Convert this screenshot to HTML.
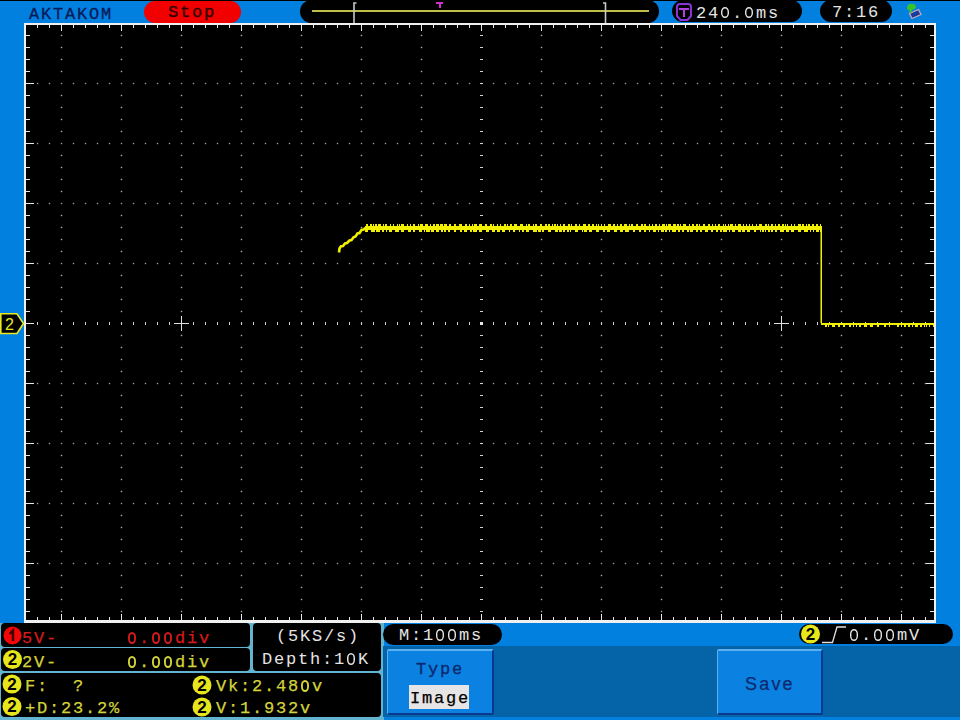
<!DOCTYPE html>
<html><head><meta charset="utf-8"><style>
*{margin:0;padding:0;box-sizing:border-box}
html,body{width:960px;height:720px;overflow:hidden;background:#0280e0;font-family:"Liberation Mono"}
.a{position:absolute}
.t{position:absolute;white-space:pre;font-size:17px;letter-spacing:1.8px;line-height:20px}
.tc{position:absolute;font-size:17px;line-height:20px;height:20px;width:10px}
.tc b{position:absolute;top:0;width:12px;text-align:center;font-weight:normal}
.tc i{position:absolute;border:2px solid;border-radius:4px/5px}
</style></head><body>
<div class="a" style="left:0;top:0;width:960px;height:1px;background:#000"></div>
<div class="a" style="left:144px;top:1px;width:97px;height:22px;border-radius:11px;background:#f20000"></div>
<div class="a" style="left:300px;top:0;width:359px;height:23px;border-radius:11.5px;background:#000"></div>
<div class="a" style="left:312px;top:10px;width:337px;height:2px;background:#bebe48"></div>
<div class="a" style="left:672px;top:0;width:130px;height:22px;border-radius:11px;background:#000"></div>
<div class="a" style="left:820px;top:0;width:72px;height:22px;border-radius:11px;background:#000"></div>
<div class="tc" style="left:28px;top:5px;color:#061a58;-webkit-text-stroke:0.3px #061a58;"><b style="left:0px">A</b><b style="left:12px">K</b><b style="left:24px">T</b><b style="left:36px">A</b><b style="left:48px">K</b><b style="left:60px">O</b><b style="left:72px">M</b></div>
<div class="tc" style="left:167px;top:3px;color:#300000;-webkit-text-stroke:0.35px #300000;"><b style="left:0px">S</b><b style="left:12px">t</b><b style="left:24px">o</b><b style="left:36px">p</b></div>
<div class="tc" style="left:695px;top:4px;color:#e4e4e4;-webkit-text-stroke:0px #e4e4e4;"><b style="left:0px">2</b><b style="left:12px">4</b><svg class="z" style="position:absolute;left:25px;top:2px" width="10" height="13"><rect x="1.7" y="1.7" width="6.6" height="9.6" rx="3.4" ry="4.2" fill="none" stroke="#e4e4e4" stroke-width="1.4"/></svg><b style="left:36px">.</b><svg class="z" style="position:absolute;left:49px;top:2px" width="10" height="13"><rect x="1.7" y="1.7" width="6.6" height="9.6" rx="3.4" ry="4.2" fill="none" stroke="#e4e4e4" stroke-width="1.4"/></svg><b style="left:60px">m</b><b style="left:72px">s</b></div>
<div class="tc" style="left:831px;top:3px;color:#e4e4e4;-webkit-text-stroke:0px #e4e4e4;"><b style="left:0px">7</b><b style="left:12px">:</b><b style="left:24px">1</b><b style="left:36px">6</b></div>

<div class="a" style="left:24px;top:23px;width:912px;height:600px;background:#f0f0f0"></div>
<div class="a" style="left:26px;top:25px;width:908px;height:595px;background:#000"></div>
<!-- bottom -->
<div class="a" style="left:0;top:623px;width:384px;height:97px;background:#62b4d0"></div>
<div class="a" style="left:383px;top:646px;width:577px;height:71px;background:#0564a8"></div>
<div class="a" style="left:1px;top:623px;width:249px;height:24px;border-radius:4px;background:#000"></div>
<div class="a" style="left:1px;top:648px;width:249px;height:23px;border-radius:4px;background:#000"></div>
<div class="a" style="left:253px;top:623px;width:128px;height:48px;border-radius:4px;background:#000"></div>
<div class="a" style="left:1px;top:673px;width:380px;height:44px;border-radius:4px;background:#000"></div>
<div class="a" style="left:383px;top:624px;width:119px;height:21px;border-radius:10.5px;background:#000"></div>
<div class="a" style="left:799px;top:624px;width:154px;height:20px;border-radius:10px;background:#000"></div>
<div class="a" style="left:387px;top:649px;width:107px;height:66px;background:#0b82e2;border-top:2px solid #5ab0f0;border-left:1px solid #5ab0f0;border-right:2px solid #0a3a90;border-bottom:2px solid #0a3a90;border-radius:2px"></div>
<div class="a" style="left:717px;top:649px;width:106px;height:66px;background:#0b82e2;border-top:2px solid #5ab0f0;border-left:1px solid #5ab0f0;border-right:2px solid #0a3a90;border-bottom:2px solid #0a3a90;border-radius:2px"></div>
<div class="a" style="left:409px;top:685px;width:60px;height:24px;background:#e6e4e4"></div>
<div class="tc" style="left:21px;top:629px;color:#d41a1a;-webkit-text-stroke:0.25px #d41a1a;"><b style="left:0px">5</b><b style="left:12px">V</b><b style="left:24px">-</b></div>
<div class="tc" style="left:126px;top:629px;color:#d41a1a;-webkit-text-stroke:0.25px #d41a1a;"><svg class="z" style="position:absolute;left:1px;top:2px" width="10" height="14"><rect x="1.95" y="1.95" width="6.1" height="10.1" rx="3.4" ry="4.2" fill="none" stroke="#d41a1a" stroke-width="1.9"/></svg><b style="left:12px">.</b><svg class="z" style="position:absolute;left:25px;top:2px" width="10" height="14"><rect x="1.95" y="1.95" width="6.1" height="10.1" rx="3.4" ry="4.2" fill="none" stroke="#d41a1a" stroke-width="1.9"/></svg><svg class="z" style="position:absolute;left:37px;top:2px" width="10" height="14"><rect x="1.95" y="1.95" width="6.1" height="10.1" rx="3.4" ry="4.2" fill="none" stroke="#d41a1a" stroke-width="1.9"/></svg><b style="left:48px">d</b><b style="left:60px">i</b><b style="left:72px">v</b></div>
<div class="tc" style="left:21px;top:653px;color:#d2d23a;-webkit-text-stroke:0.25px #d2d23a;"><b style="left:0px">2</b><b style="left:12px">V</b><b style="left:24px">-</b></div>
<div class="tc" style="left:126px;top:653px;color:#d2d23a;-webkit-text-stroke:0.25px #d2d23a;"><svg class="z" style="position:absolute;left:1px;top:2px" width="10" height="14"><rect x="1.95" y="1.95" width="6.1" height="10.1" rx="3.4" ry="4.2" fill="none" stroke="#d2d23a" stroke-width="1.9"/></svg><b style="left:12px">.</b><svg class="z" style="position:absolute;left:25px;top:2px" width="10" height="14"><rect x="1.95" y="1.95" width="6.1" height="10.1" rx="3.4" ry="4.2" fill="none" stroke="#d2d23a" stroke-width="1.9"/></svg><svg class="z" style="position:absolute;left:37px;top:2px" width="10" height="14"><rect x="1.95" y="1.95" width="6.1" height="10.1" rx="3.4" ry="4.2" fill="none" stroke="#d2d23a" stroke-width="1.9"/></svg><b style="left:48px">d</b><b style="left:60px">i</b><b style="left:72px">v</b></div>

<div class="tc" style="left:275px;top:627px;color:#e4e4e4;-webkit-text-stroke:0px #e4e4e4;"><b style="left:0px">(</b><b style="left:12px">5</b><b style="left:24px">K</b><b style="left:36px">S</b><b style="left:48px">/</b><b style="left:60px">s</b><b style="left:72px">)</b></div>
<div class="tc" style="left:261px;top:650px;color:#e4e4e4;-webkit-text-stroke:0px #e4e4e4;"><b style="left:0px">D</b><b style="left:12px">e</b><b style="left:24px">p</b><b style="left:36px">t</b><b style="left:48px">h</b><b style="left:60px">:</b><b style="left:72px">1</b><svg class="z" style="position:absolute;left:85px;top:2px" width="10" height="14"><rect x="1.75" y="1.75" width="6.5" height="10.5" rx="3.4" ry="4.2" fill="none" stroke="#e4e4e4" stroke-width="1.5"/></svg><b style="left:96px">K</b></div>

<div class="tc" style="left:24px;top:677px;color:#d2d23a;-webkit-text-stroke:0.25px #d2d23a;"><b style="left:0px">F</b><b style="left:12px">:</b><b style="left:48px">?</b></div>
<div class="tc" style="left:24px;top:699px;color:#d2d23a;-webkit-text-stroke:0.25px #d2d23a;"><b style="left:0px">+</b><b style="left:12px">D</b><b style="left:24px">:</b><b style="left:36px">2</b><b style="left:48px">3</b><b style="left:60px">.</b><b style="left:72px">2</b><b style="left:84px">%</b></div>
<div class="tc" style="left:215px;top:677px;color:#d2d23a;-webkit-text-stroke:0.25px #d2d23a;"><b style="left:0px">V</b><b style="left:12px">k</b><b style="left:24px">:</b><b style="left:36px">2</b><b style="left:48px">.</b><b style="left:60px">4</b><b style="left:72px">8</b><svg class="z" style="position:absolute;left:85px;top:2px" width="10" height="14"><rect x="1.95" y="1.95" width="6.1" height="10.1" rx="3.4" ry="4.2" fill="none" stroke="#d2d23a" stroke-width="1.9"/></svg><b style="left:96px">v</b></div>
<div class="tc" style="left:215px;top:699px;color:#d2d23a;-webkit-text-stroke:0.25px #d2d23a;"><b style="left:0px">V</b><b style="left:12px">:</b><b style="left:24px">1</b><b style="left:36px">.</b><b style="left:48px">9</b><b style="left:60px">3</b><b style="left:72px">2</b><b style="left:84px">v</b></div>

<div class="tc" style="left:398px;top:626px;color:#e4e4e4;-webkit-text-stroke:0px #e4e4e4;"><b style="left:0px">M</b><b style="left:12px">:</b><b style="left:24px">1</b><svg class="z" style="position:absolute;left:37px;top:2px" width="10" height="14"><rect x="1.7" y="1.7" width="6.6" height="10.6" rx="3.4" ry="4.2" fill="none" stroke="#e4e4e4" stroke-width="1.4"/></svg><svg class="z" style="position:absolute;left:49px;top:2px" width="10" height="14"><rect x="1.7" y="1.7" width="6.6" height="10.6" rx="3.4" ry="4.2" fill="none" stroke="#e4e4e4" stroke-width="1.4"/></svg><b style="left:60px">m</b><b style="left:72px">s</b></div>
<div class="tc" style="left:848px;top:626px;color:#e4e4e4;-webkit-text-stroke:0px #e4e4e4;"><svg class="z" style="position:absolute;left:1px;top:2px" width="10" height="14"><rect x="1.7" y="1.7" width="6.6" height="10.6" rx="3.4" ry="4.2" fill="none" stroke="#e4e4e4" stroke-width="1.4"/></svg><b style="left:12px">.</b><svg class="z" style="position:absolute;left:25px;top:2px" width="10" height="14"><rect x="1.7" y="1.7" width="6.6" height="10.6" rx="3.4" ry="4.2" fill="none" stroke="#e4e4e4" stroke-width="1.4"/></svg><svg class="z" style="position:absolute;left:37px;top:2px" width="10" height="14"><rect x="1.7" y="1.7" width="6.6" height="10.6" rx="3.4" ry="4.2" fill="none" stroke="#e4e4e4" stroke-width="1.4"/></svg><b style="left:48px">m</b><b style="left:60px">V</b></div>

<div class="tc" style="left:415px;top:660px;color:#0a2a70;-webkit-text-stroke:0.4px #0a2a70;"><b style="left:0px">T</b><b style="left:12px">y</b><b style="left:24px">p</b><b style="left:36px">e</b></div>
<div class="tc" style="left:409px;top:689px;color:#000;-webkit-text-stroke:0.25px #000;"><b style="left:0px">I</b><b style="left:12px">m</b><b style="left:24px">a</b><b style="left:36px">g</b><b style="left:48px">e</b></div>

<div class="t" style="left:745px;top:674px;color:#0a2a70;font-family:'Liberation Sans';font-size:18px;letter-spacing:2.2px;-webkit-text-stroke:0.25px #0a2a70">Save</div>
<svg class="a" style="left:0;top:0" width="960" height="720"><defs><pattern id="pv" patternUnits="userSpaceOnUse" x="60" y="34" width="60" height="12"><rect x="0" y="1" width="3" height="1" fill="#2a2a2a"/><rect x="1" y="0" width="1" height="3" fill="#2a2a2a"/><rect x="1" y="1" width="1" height="1" fill="#a4a4a4"/></pattern><pattern id="ph" patternUnits="userSpaceOnUse" x="36" y="82" width="12" height="60"><rect x="0" y="1" width="3" height="1" fill="#202020"/><rect x="1" y="0" width="1" height="3" fill="#202020"/><rect x="1" y="1" width="1" height="1" fill="#989898"/></pattern><pattern id="pcv" patternUnits="userSpaceOnUse" x="480" y="35" width="3" height="12"><rect x="0" y="0" width="3" height="1" fill="#d0d0d0"/></pattern><pattern id="pch" patternUnits="userSpaceOnUse" x="37" y="322" width="12" height="3"><rect x="0" y="0" width="1" height="3" fill="#d0d0d0"/></pattern><pattern id="tx" patternUnits="userSpaceOnUse" x="37" y="0" width="12" height="720"><rect x="0" y="0" width="1" height="720" fill="#e8e8e8"/></pattern><pattern id="tX" patternUnits="userSpaceOnUse" x="61" y="0" width="60" height="720"><rect x="0" y="0" width="1" height="720" fill="#e8e8e8"/></pattern><pattern id="ty" patternUnits="userSpaceOnUse" x="0" y="35" width="960" height="12"><rect x="0" y="0" width="960" height="1" fill="#e8e8e8"/></pattern><pattern id="tY" patternUnits="userSpaceOnUse" x="0" y="83" width="960" height="60"><rect x="0" y="0" width="960" height="1" fill="#e8e8e8"/></pattern></defs><g shape-rendering="crispEdges"><rect x="60" y="34" width="420" height="579" fill="url(#pv)"/><rect x="540" y="34" width="363" height="579" fill="url(#pv)"/><rect x="36" y="82" width="891" height="240" fill="url(#ph)"/><rect x="36" y="382" width="891" height="183" fill="url(#ph)"/><rect x="480" y="35" width="3" height="577" fill="url(#pcv)"/><rect x="37" y="322" width="889" height="3" fill="url(#pch)"/><rect x="480" y="322" width="3" height="3" fill="#e8e8e8"/><rect x="37" y="25" width="889" height="3" fill="url(#tx)"/><rect x="37" y="617" width="889" height="3" fill="url(#tx)"/><rect x="61" y="25" width="841" height="6" fill="url(#tX)"/><rect x="61" y="614" width="841" height="6" fill="url(#tX)"/><rect x="26" y="35" width="4" height="577" fill="url(#ty)"/><rect x="930" y="35" width="4" height="577" fill="url(#ty)"/><rect x="26" y="83" width="8" height="481" fill="url(#tY)"/><rect x="926" y="83" width="8" height="481" fill="url(#tY)"/><rect x="174" y="323" width="15" height="1" fill="#e0e0e0"/><rect x="181" y="316" width="1" height="15" fill="#e0e0e0"/><rect x="774" y="323" width="15" height="1" fill="#e0e0e0"/><rect x="781" y="316" width="1" height="15" fill="#e0e0e0"/><rect x="820" y="229" width="1" height="94" fill="#7a7a10"/><rect x="365" y="226" width="457" height="4" fill="#f0f000"/><rect x="366" y="224" width="2" height="2" fill="#f0f000"/><rect x="370" y="224" width="2" height="2" fill="#f0f000"/><rect x="373" y="224" width="1" height="2" fill="#f0f000"/><rect x="375" y="224" width="2" height="2" fill="#f0f000"/><rect x="378" y="224" width="3" height="2" fill="#f0f000"/><rect x="383" y="224" width="1" height="2" fill="#f0f000"/><rect x="385" y="224" width="2" height="2" fill="#f0f000"/><rect x="390" y="224" width="1" height="2" fill="#f0f000"/><rect x="393" y="224" width="1" height="2" fill="#f0f000"/><rect x="397" y="224" width="1" height="2" fill="#f0f000"/><rect x="399" y="224" width="1" height="2" fill="#f0f000"/><rect x="401" y="224" width="3" height="2" fill="#f0f000"/><rect x="407" y="224" width="1" height="2" fill="#f0f000"/><rect x="410" y="224" width="1" height="2" fill="#f0f000"/><rect x="413" y="224" width="2" height="2" fill="#f0f000"/><rect x="418" y="224" width="1" height="2" fill="#f0f000"/><rect x="420" y="224" width="3" height="2" fill="#f0f000"/><rect x="425" y="224" width="3" height="2" fill="#f0f000"/><rect x="430" y="224" width="1" height="2" fill="#f0f000"/><rect x="433" y="224" width="2" height="2" fill="#f0f000"/><rect x="436" y="224" width="3" height="2" fill="#f0f000"/><rect x="440" y="224" width="3" height="2" fill="#f0f000"/><rect x="444" y="224" width="3" height="2" fill="#f0f000"/><rect x="449" y="224" width="2" height="2" fill="#f0f000"/><rect x="454" y="224" width="2" height="2" fill="#f0f000"/><rect x="459" y="224" width="3" height="2" fill="#f0f000"/><rect x="465" y="224" width="2" height="2" fill="#f0f000"/><rect x="469" y="224" width="1" height="2" fill="#f0f000"/><rect x="472" y="224" width="1" height="2" fill="#f0f000"/><rect x="474" y="224" width="3" height="2" fill="#f0f000"/><rect x="479" y="224" width="3" height="2" fill="#f0f000"/><rect x="485" y="224" width="2" height="2" fill="#f0f000"/><rect x="490" y="224" width="2" height="2" fill="#f0f000"/><rect x="493" y="224" width="1" height="2" fill="#f0f000"/><rect x="497" y="224" width="1" height="2" fill="#f0f000"/><rect x="500" y="224" width="1" height="2" fill="#f0f000"/><rect x="504" y="224" width="2" height="2" fill="#f0f000"/><rect x="507" y="224" width="1" height="2" fill="#f0f000"/><rect x="510" y="224" width="2" height="2" fill="#f0f000"/><rect x="514" y="224" width="3" height="2" fill="#f0f000"/><rect x="520" y="224" width="3" height="2" fill="#f0f000"/><rect x="526" y="224" width="1" height="2" fill="#f0f000"/><rect x="528" y="224" width="2" height="2" fill="#f0f000"/><rect x="533" y="224" width="1" height="2" fill="#f0f000"/><rect x="535" y="224" width="2" height="2" fill="#f0f000"/><rect x="540" y="224" width="2" height="2" fill="#f0f000"/><rect x="545" y="224" width="2" height="2" fill="#f0f000"/><rect x="548" y="224" width="2" height="2" fill="#f0f000"/><rect x="552" y="224" width="1" height="2" fill="#f0f000"/><rect x="554" y="224" width="2" height="2" fill="#f0f000"/><rect x="557" y="224" width="1" height="2" fill="#f0f000"/><rect x="560" y="224" width="1" height="2" fill="#f0f000"/><rect x="563" y="224" width="2" height="2" fill="#f0f000"/><rect x="568" y="224" width="2" height="2" fill="#f0f000"/><rect x="571" y="224" width="1" height="2" fill="#f0f000"/><rect x="575" y="224" width="2" height="2" fill="#f0f000"/><rect x="579" y="224" width="1" height="2" fill="#f0f000"/><rect x="583" y="224" width="3" height="2" fill="#f0f000"/><rect x="588" y="224" width="2" height="2" fill="#f0f000"/><rect x="592" y="224" width="2" height="2" fill="#f0f000"/><rect x="596" y="224" width="1" height="2" fill="#f0f000"/><rect x="598" y="224" width="1" height="2" fill="#f0f000"/><rect x="601" y="224" width="1" height="2" fill="#f0f000"/><rect x="604" y="224" width="1" height="2" fill="#f0f000"/><rect x="608" y="224" width="3" height="2" fill="#f0f000"/><rect x="613" y="224" width="2" height="2" fill="#f0f000"/><rect x="617" y="224" width="1" height="2" fill="#f0f000"/><rect x="620" y="224" width="2" height="2" fill="#f0f000"/><rect x="624" y="224" width="3" height="2" fill="#f0f000"/><rect x="629" y="224" width="1" height="2" fill="#f0f000"/><rect x="631" y="224" width="2" height="2" fill="#f0f000"/><rect x="636" y="224" width="2" height="2" fill="#f0f000"/><rect x="641" y="224" width="2" height="2" fill="#f0f000"/><rect x="644" y="224" width="2" height="2" fill="#f0f000"/><rect x="649" y="224" width="1" height="2" fill="#f0f000"/><rect x="652" y="224" width="1" height="2" fill="#f0f000"/><rect x="655" y="224" width="2" height="2" fill="#f0f000"/><rect x="659" y="224" width="1" height="2" fill="#f0f000"/><rect x="662" y="224" width="3" height="2" fill="#f0f000"/><rect x="666" y="224" width="1" height="2" fill="#f0f000"/><rect x="668" y="224" width="3" height="2" fill="#f0f000"/><rect x="673" y="224" width="3" height="2" fill="#f0f000"/><rect x="677" y="224" width="2" height="2" fill="#f0f000"/><rect x="680" y="224" width="1" height="2" fill="#f0f000"/><rect x="683" y="224" width="3" height="2" fill="#f0f000"/><rect x="689" y="224" width="1" height="2" fill="#f0f000"/><rect x="692" y="224" width="2" height="2" fill="#f0f000"/><rect x="696" y="224" width="2" height="2" fill="#f0f000"/><rect x="699" y="224" width="1" height="2" fill="#f0f000"/><rect x="703" y="224" width="2" height="2" fill="#f0f000"/><rect x="708" y="224" width="2" height="2" fill="#f0f000"/><rect x="712" y="224" width="1" height="2" fill="#f0f000"/><rect x="715" y="224" width="1" height="2" fill="#f0f000"/><rect x="718" y="224" width="2" height="2" fill="#f0f000"/><rect x="723" y="224" width="1" height="2" fill="#f0f000"/><rect x="725" y="224" width="1" height="2" fill="#f0f000"/><rect x="728" y="224" width="1" height="2" fill="#f0f000"/><rect x="730" y="224" width="3" height="2" fill="#f0f000"/><rect x="735" y="224" width="1" height="2" fill="#f0f000"/><rect x="738" y="224" width="3" height="2" fill="#f0f000"/><rect x="743" y="224" width="1" height="2" fill="#f0f000"/><rect x="746" y="224" width="1" height="2" fill="#f0f000"/><rect x="749" y="224" width="1" height="2" fill="#f0f000"/><rect x="752" y="224" width="1" height="2" fill="#f0f000"/><rect x="756" y="224" width="1" height="2" fill="#f0f000"/><rect x="759" y="224" width="3" height="2" fill="#f0f000"/><rect x="765" y="224" width="2" height="2" fill="#f0f000"/><rect x="768" y="224" width="1" height="2" fill="#f0f000"/><rect x="771" y="224" width="2" height="2" fill="#f0f000"/><rect x="775" y="224" width="1" height="2" fill="#f0f000"/><rect x="778" y="224" width="2" height="2" fill="#f0f000"/><rect x="782" y="224" width="2" height="2" fill="#f0f000"/><rect x="785" y="224" width="1" height="2" fill="#f0f000"/><rect x="787" y="224" width="1" height="2" fill="#f0f000"/><rect x="791" y="224" width="1" height="2" fill="#f0f000"/><rect x="794" y="224" width="1" height="2" fill="#f0f000"/><rect x="798" y="224" width="3" height="2" fill="#f0f000"/><rect x="802" y="224" width="2" height="2" fill="#f0f000"/><rect x="806" y="224" width="1" height="2" fill="#f0f000"/><rect x="808" y="224" width="2" height="2" fill="#f0f000"/><rect x="812" y="224" width="2" height="2" fill="#f0f000"/><rect x="816" y="224" width="2" height="2" fill="#f0f000"/><rect x="820" y="224" width="1" height="2" fill="#f0f000"/><rect x="365" y="230" width="3" height="2" fill="#f0f000"/><rect x="371" y="230" width="4" height="2" fill="#f0f000"/><rect x="376" y="230" width="4" height="2" fill="#f0f000"/><rect x="382" y="230" width="2" height="2" fill="#f0f000"/><rect x="386" y="230" width="1" height="2" fill="#f0f000"/><rect x="389" y="230" width="3" height="2" fill="#f0f000"/><rect x="395" y="230" width="4" height="2" fill="#f0f000"/><rect x="401" y="230" width="3" height="2" fill="#f0f000"/><rect x="408" y="230" width="3" height="2" fill="#f0f000"/><rect x="413" y="230" width="2" height="2" fill="#f0f000"/><rect x="419" y="230" width="3" height="2" fill="#f0f000"/><rect x="424" y="230" width="1" height="2" fill="#f0f000"/><rect x="426" y="230" width="4" height="2" fill="#f0f000"/><rect x="431" y="230" width="3" height="2" fill="#f0f000"/><rect x="436" y="230" width="3" height="2" fill="#f0f000"/><rect x="441" y="230" width="2" height="2" fill="#f0f000"/><rect x="444" y="230" width="2" height="2" fill="#f0f000"/><rect x="448" y="230" width="2" height="2" fill="#f0f000"/><rect x="454" y="230" width="2" height="2" fill="#f0f000"/><rect x="460" y="230" width="2" height="2" fill="#f0f000"/><rect x="464" y="230" width="3" height="2" fill="#f0f000"/><rect x="470" y="230" width="2" height="2" fill="#f0f000"/><rect x="473" y="230" width="4" height="2" fill="#f0f000"/><rect x="479" y="230" width="3" height="2" fill="#f0f000"/><rect x="486" y="230" width="3" height="2" fill="#f0f000"/><rect x="492" y="230" width="3" height="2" fill="#f0f000"/><rect x="497" y="230" width="3" height="2" fill="#f0f000"/><rect x="502" y="230" width="3" height="2" fill="#f0f000"/><rect x="509" y="230" width="1" height="2" fill="#f0f000"/><rect x="513" y="230" width="2" height="2" fill="#f0f000"/><rect x="519" y="230" width="1" height="2" fill="#f0f000"/><rect x="522" y="230" width="2" height="2" fill="#f0f000"/><rect x="526" y="230" width="3" height="2" fill="#f0f000"/><rect x="533" y="230" width="4" height="2" fill="#f0f000"/><rect x="538" y="230" width="3" height="2" fill="#f0f000"/><rect x="542" y="230" width="2" height="2" fill="#f0f000"/><rect x="548" y="230" width="3" height="2" fill="#f0f000"/><rect x="555" y="230" width="3" height="2" fill="#f0f000"/><rect x="559" y="230" width="3" height="2" fill="#f0f000"/><rect x="563" y="230" width="2" height="2" fill="#f0f000"/><rect x="567" y="230" width="2" height="2" fill="#f0f000"/><rect x="570" y="230" width="1" height="2" fill="#f0f000"/><rect x="575" y="230" width="3" height="2" fill="#f0f000"/><rect x="582" y="230" width="1" height="2" fill="#f0f000"/><rect x="584" y="230" width="3" height="2" fill="#f0f000"/><rect x="589" y="230" width="3" height="2" fill="#f0f000"/><rect x="596" y="230" width="3" height="2" fill="#f0f000"/><rect x="603" y="230" width="2" height="2" fill="#f0f000"/><rect x="607" y="230" width="3" height="2" fill="#f0f000"/><rect x="614" y="230" width="3" height="2" fill="#f0f000"/><rect x="620" y="230" width="3" height="2" fill="#f0f000"/><rect x="625" y="230" width="4" height="2" fill="#f0f000"/><rect x="633" y="230" width="2" height="2" fill="#f0f000"/><rect x="639" y="230" width="2" height="2" fill="#f0f000"/><rect x="644" y="230" width="2" height="2" fill="#f0f000"/><rect x="649" y="230" width="1" height="2" fill="#f0f000"/><rect x="653" y="230" width="3" height="2" fill="#f0f000"/><rect x="658" y="230" width="1" height="2" fill="#f0f000"/><rect x="661" y="230" width="3" height="2" fill="#f0f000"/><rect x="665" y="230" width="2" height="2" fill="#f0f000"/><rect x="669" y="230" width="1" height="2" fill="#f0f000"/><rect x="672" y="230" width="4" height="2" fill="#f0f000"/><rect x="678" y="230" width="2" height="2" fill="#f0f000"/><rect x="682" y="230" width="2" height="2" fill="#f0f000"/><rect x="687" y="230" width="2" height="2" fill="#f0f000"/><rect x="690" y="230" width="3" height="2" fill="#f0f000"/><rect x="696" y="230" width="2" height="2" fill="#f0f000"/><rect x="700" y="230" width="2" height="2" fill="#f0f000"/><rect x="705" y="230" width="3" height="2" fill="#f0f000"/><rect x="711" y="230" width="2" height="2" fill="#f0f000"/><rect x="716" y="230" width="2" height="2" fill="#f0f000"/><rect x="720" y="230" width="2" height="2" fill="#f0f000"/><rect x="723" y="230" width="4" height="2" fill="#f0f000"/><rect x="729" y="230" width="1" height="2" fill="#f0f000"/><rect x="732" y="230" width="3" height="2" fill="#f0f000"/><rect x="738" y="230" width="3" height="2" fill="#f0f000"/><rect x="742" y="230" width="3" height="2" fill="#f0f000"/><rect x="747" y="230" width="3" height="2" fill="#f0f000"/><rect x="754" y="230" width="2" height="2" fill="#f0f000"/><rect x="760" y="230" width="1" height="2" fill="#f0f000"/><rect x="762" y="230" width="2" height="2" fill="#f0f000"/><rect x="765" y="230" width="1" height="2" fill="#f0f000"/><rect x="768" y="230" width="2" height="2" fill="#f0f000"/><rect x="771" y="230" width="2" height="2" fill="#f0f000"/><rect x="775" y="230" width="2" height="2" fill="#f0f000"/><rect x="780" y="230" width="4" height="2" fill="#f0f000"/><rect x="786" y="230" width="3" height="2" fill="#f0f000"/><rect x="791" y="230" width="3" height="2" fill="#f0f000"/><rect x="798" y="230" width="3" height="2" fill="#f0f000"/><rect x="804" y="230" width="4" height="2" fill="#f0f000"/><rect x="810" y="230" width="1" height="2" fill="#f0f000"/><rect x="813" y="230" width="1" height="2" fill="#f0f000"/><rect x="816" y="230" width="3" height="2" fill="#f0f000"/><rect x="820" y="230" width="1" height="2" fill="#f0f000"/><rect x="821" y="226" width="1" height="98" fill="#f0f000"/><rect x="821" y="323" width="1" height="2" fill="#f0f000"/><rect x="822" y="323" width="1" height="2" fill="#f0f000"/><rect x="823" y="323" width="1" height="2" fill="#f0f000"/><rect x="824" y="323" width="1" height="2" fill="#f0f000"/><rect x="825" y="323" width="1" height="2" fill="#f0f000"/><rect x="826" y="323" width="1" height="2" fill="#f0f000"/><rect x="827" y="323" width="1" height="2" fill="#f0f000"/><rect x="828" y="323" width="1" height="2" fill="#f0f000"/><rect x="829" y="323" width="1" height="2" fill="#f0f000"/><rect x="830" y="323" width="1" height="2" fill="#f0f000"/><rect x="831" y="323" width="1" height="2" fill="#f0f000"/><rect x="832" y="323" width="1" height="2" fill="#f0f000"/><rect x="833" y="323" width="1" height="2" fill="#f0f000"/><rect x="834" y="323" width="1" height="2" fill="#f0f000"/><rect x="835" y="323" width="1" height="2" fill="#f0f000"/><rect x="836" y="323" width="1" height="2" fill="#f0f000"/><rect x="837" y="323" width="1" height="2" fill="#f0f000"/><rect x="838" y="323" width="1" height="2" fill="#f0f000"/><rect x="839" y="323" width="1" height="2" fill="#f0f000"/><rect x="840" y="323" width="1" height="2" fill="#f0f000"/><rect x="841" y="323" width="1" height="2" fill="#f0f000"/><rect x="842" y="323" width="1" height="2" fill="#f0f000"/><rect x="843" y="323" width="1" height="2" fill="#f0f000"/><rect x="844" y="323" width="1" height="2" fill="#f0f000"/><rect x="845" y="323" width="1" height="2" fill="#f0f000"/><rect x="846" y="323" width="1" height="2" fill="#f0f000"/><rect x="847" y="323" width="1" height="2" fill="#f0f000"/><rect x="848" y="323" width="1" height="2" fill="#f0f000"/><rect x="849" y="323" width="1" height="2" fill="#f0f000"/><rect x="850" y="323" width="1" height="2" fill="#f0f000"/><rect x="851" y="323" width="1" height="2" fill="#f0f000"/><rect x="852" y="323" width="1" height="2" fill="#f0f000"/><rect x="853" y="323" width="1" height="2" fill="#f0f000"/><rect x="854" y="323" width="1" height="2" fill="#f0f000"/><rect x="855" y="323" width="1" height="2" fill="#f0f000"/><rect x="856" y="323" width="1" height="2" fill="#f0f000"/><rect x="857" y="323" width="1" height="2" fill="#f0f000"/><rect x="858" y="323" width="1" height="2" fill="#f0f000"/><rect x="859" y="323" width="1" height="2" fill="#f0f000"/><rect x="860" y="323" width="1" height="2" fill="#f0f000"/><rect x="861" y="323" width="1" height="2" fill="#f0f000"/><rect x="862" y="323" width="1" height="2" fill="#f0f000"/><rect x="863" y="323" width="1" height="2" fill="#f0f000"/><rect x="864" y="323" width="1" height="2" fill="#f0f000"/><rect x="865" y="323" width="1" height="2" fill="#f0f000"/><rect x="866" y="323" width="1" height="2" fill="#f0f000"/><rect x="867" y="323" width="1" height="2" fill="#f0f000"/><rect x="868" y="323" width="1" height="2" fill="#f0f000"/><rect x="869" y="323" width="1" height="2" fill="#f0f000"/><rect x="870" y="323" width="1" height="2" fill="#f0f000"/><rect x="871" y="323" width="1" height="2" fill="#f0f000"/><rect x="872" y="323" width="1" height="2" fill="#f0f000"/><rect x="873" y="323" width="1" height="2" fill="#f0f000"/><rect x="874" y="323" width="1" height="2" fill="#f0f000"/><rect x="875" y="323" width="1" height="2" fill="#f0f000"/><rect x="876" y="323" width="1" height="2" fill="#f0f000"/><rect x="877" y="323" width="1" height="2" fill="#f0f000"/><rect x="878" y="323" width="1" height="2" fill="#f0f000"/><rect x="879" y="323" width="1" height="2" fill="#f0f000"/><rect x="880" y="323" width="1" height="2" fill="#f0f000"/><rect x="881" y="323" width="1" height="2" fill="#f0f000"/><rect x="882" y="323" width="1" height="2" fill="#f0f000"/><rect x="883" y="323" width="1" height="2" fill="#f0f000"/><rect x="884" y="323" width="1" height="2" fill="#f0f000"/><rect x="885" y="323" width="1" height="2" fill="#f0f000"/><rect x="886" y="323" width="1" height="2" fill="#f0f000"/><rect x="887" y="323" width="1" height="2" fill="#f0f000"/><rect x="888" y="323" width="1" height="2" fill="#f0f000"/><rect x="889" y="323" width="1" height="2" fill="#f0f000"/><rect x="890" y="323" width="1" height="2" fill="#f0f000"/><rect x="891" y="323" width="1" height="2" fill="#f0f000"/><rect x="892" y="323" width="1" height="2" fill="#f0f000"/><rect x="893" y="323" width="1" height="2" fill="#f0f000"/><rect x="894" y="323" width="1" height="2" fill="#f0f000"/><rect x="895" y="323" width="1" height="2" fill="#f0f000"/><rect x="896" y="323" width="1" height="2" fill="#f0f000"/><rect x="897" y="323" width="1" height="2" fill="#f0f000"/><rect x="898" y="323" width="1" height="2" fill="#f0f000"/><rect x="899" y="323" width="1" height="2" fill="#f0f000"/><rect x="900" y="323" width="1" height="2" fill="#f0f000"/><rect x="901" y="323" width="1" height="2" fill="#f0f000"/><rect x="902" y="323" width="1" height="2" fill="#f0f000"/><rect x="903" y="323" width="1" height="2" fill="#f0f000"/><rect x="904" y="323" width="1" height="2" fill="#f0f000"/><rect x="905" y="323" width="1" height="2" fill="#f0f000"/><rect x="906" y="323" width="1" height="2" fill="#f0f000"/><rect x="907" y="323" width="1" height="2" fill="#f0f000"/><rect x="908" y="323" width="1" height="2" fill="#f0f000"/><rect x="909" y="323" width="1" height="2" fill="#f0f000"/><rect x="910" y="323" width="1" height="2" fill="#f0f000"/><rect x="911" y="323" width="1" height="2" fill="#f0f000"/><rect x="912" y="323" width="1" height="2" fill="#f0f000"/><rect x="913" y="323" width="1" height="2" fill="#f0f000"/><rect x="914" y="323" width="1" height="2" fill="#f0f000"/><rect x="915" y="323" width="1" height="2" fill="#f0f000"/><rect x="916" y="323" width="1" height="2" fill="#f0f000"/><rect x="917" y="323" width="1" height="2" fill="#f0f000"/><rect x="918" y="323" width="1" height="2" fill="#f0f000"/><rect x="919" y="323" width="1" height="2" fill="#f0f000"/><rect x="920" y="323" width="1" height="2" fill="#f0f000"/><rect x="921" y="323" width="1" height="2" fill="#f0f000"/><rect x="922" y="323" width="1" height="2" fill="#f0f000"/><rect x="923" y="323" width="1" height="2" fill="#f0f000"/><rect x="924" y="323" width="1" height="2" fill="#f0f000"/><rect x="925" y="323" width="1" height="2" fill="#f0f000"/><rect x="926" y="323" width="1" height="2" fill="#f0f000"/><rect x="927" y="323" width="1" height="2" fill="#f0f000"/><rect x="928" y="323" width="1" height="2" fill="#f0f000"/><rect x="929" y="323" width="1" height="2" fill="#f0f000"/><rect x="930" y="323" width="1" height="2" fill="#f0f000"/><rect x="931" y="323" width="1" height="2" fill="#f0f000"/><rect x="932" y="323" width="1" height="2" fill="#f0f000"/><rect x="933" y="323" width="1" height="2" fill="#f0f000"/><rect x="825" y="325" width="2" height="2" fill="#f0f000"/><rect x="828" y="325" width="1" height="2" fill="#f0f000"/><rect x="832" y="325" width="3" height="2" fill="#f0f000"/><rect x="838" y="325" width="2" height="2" fill="#f0f000"/><rect x="843" y="325" width="2" height="2" fill="#f0f000"/><rect x="849" y="325" width="2" height="2" fill="#f0f000"/><rect x="853" y="325" width="1" height="2" fill="#f0f000"/><rect x="856" y="325" width="1" height="2" fill="#f0f000"/><rect x="859" y="325" width="2" height="2" fill="#f0f000"/><rect x="864" y="325" width="3" height="2" fill="#f0f000"/><rect x="870" y="325" width="3" height="2" fill="#f0f000"/><rect x="877" y="325" width="2" height="2" fill="#f0f000"/><rect x="884" y="325" width="2" height="2" fill="#f0f000"/><rect x="889" y="325" width="1" height="2" fill="#f0f000"/><rect x="897" y="325" width="2" height="2" fill="#f0f000"/><rect x="901" y="325" width="1" height="2" fill="#f0f000"/><rect x="904" y="325" width="2" height="2" fill="#f0f000"/><rect x="908" y="325" width="2" height="2" fill="#f0f000"/><rect x="912" y="325" width="1" height="2" fill="#f0f000"/><rect x="915" y="325" width="3" height="2" fill="#f0f000"/><rect x="920" y="325" width="2" height="2" fill="#f0f000"/><rect x="924" y="325" width="1" height="2" fill="#f0f000"/><rect x="926" y="325" width="1" height="2" fill="#f0f000"/><rect x="929" y="325" width="1" height="2" fill="#f0f000"/><rect x="933" y="325" width="1" height="2" fill="#f0f000"/></g><polyline points="339,252.5 339.5,248.5 341,246.3 343,246 345,243.5 347,243 349.5,240.5 351.5,240 353.5,237.3 355.5,236.5 357.5,233.5 359.5,233 361.5,230 363.5,229.5 366,227.5" fill="none" stroke="#f0f000" stroke-width="2.6"/><circle cx="12.5" cy="635.5" r="9" fill="#f00808"/><path d="M9.6,634 L13,630.6 V641" fill="none" stroke="#3a0000" stroke-width="2.4"/><circle cx="12.5" cy="659.5" r="9.5" fill="#e6e61a"/><text x="12.5" y="665.3" text-anchor="middle" font-family="Liberation Sans" font-weight="bold" font-size="17" fill="#000">2</text><circle cx="12" cy="684" r="9.5" fill="#e6e61a"/><text x="12" y="689.8" text-anchor="middle" font-family="Liberation Sans" font-weight="bold" font-size="17" fill="#000">2</text><circle cx="12" cy="706.5" r="9.5" fill="#e6e61a"/><text x="12" y="712.3" text-anchor="middle" font-family="Liberation Sans" font-weight="bold" font-size="17" fill="#000">2</text><circle cx="202" cy="685" r="9.5" fill="#e6e61a"/><text x="202" y="690.8" text-anchor="middle" font-family="Liberation Sans" font-weight="bold" font-size="17" fill="#000">2</text><circle cx="202" cy="707" r="9.5" fill="#e6e61a"/><text x="202" y="712.8" text-anchor="middle" font-family="Liberation Sans" font-weight="bold" font-size="17" fill="#000">2</text><circle cx="810.5" cy="634" r="9.5" fill="#e6e61a"/><text x="810.5" y="639.8" text-anchor="middle" font-family="Liberation Sans" font-weight="bold" font-size="17" fill="#000">2</text><polyline points="822,642.5 832.5,642.5 837,627 846,627" fill="none" stroke="#e0e0e0" stroke-width="1.3"/><path d="M677,7 Q677,4 680,4 H688 Q691,4 691,7 V16 L687.5,20 H680.5 L677,16 Z" fill="#000" stroke="#8a34d8" stroke-width="2"/><rect x="679" y="8" width="10" height="2" fill="#b040e0"/><rect x="683" y="8" width="2" height="9" fill="#b040e0"/><rect x="436" y="2" width="7" height="2" fill="#d030d0"/><rect x="439" y="4" width="2" height="4" fill="#d030d0"/><path d="M354,23 V3 H356.5" fill="none" stroke="#c8c8d0" stroke-width="1.6"/><path d="M605.5,23 V3 H603" fill="none" stroke="#c8c8d0" stroke-width="1.6"/><path d="M0.8,313.8 H17 L23.5,323.5 L17,333.5 H0.8 Z" fill="#000" stroke="#e8e820" stroke-width="1.6"/><text x="9.5" y="330" text-anchor="middle" font-family="Liberation Sans" font-size="16" fill="#e8e820">2</text><path d="M909.5,13.5 L918.5,9.5 L921,14.5 L912,18.5 Z" fill="#1a3a98" stroke="#c8a8b8" stroke-width="1.3"/><path d="M907,7 Q907.5,4 911,3.8 Q915.5,3.6 916,6.5 Q915.5,9.5 912,10 L911,13 L909.5,13 L909.5,10.5 Q906.5,9.5 907,7 Z" fill="#38c428"/></svg>
</body></html>
